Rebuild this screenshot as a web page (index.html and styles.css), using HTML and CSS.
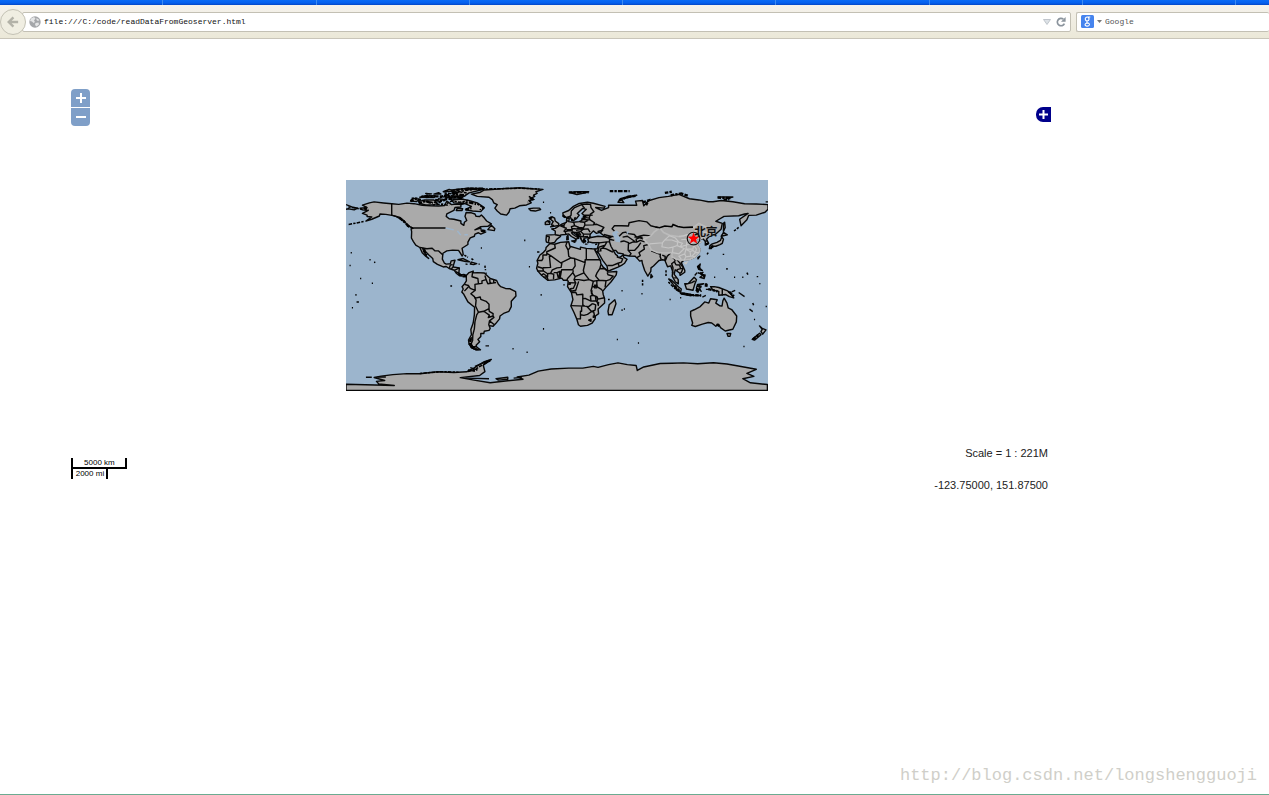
FILE: index.html
```html
<!DOCTYPE html>
<html lang="zh-CN">
<head>
    <meta charset="UTF-8">
    <title>readDataFromGeoserver</title>
    <link rel="stylesheet" href="styles.css">
</head>
<body>
    <div class="tab-strip"></div>
    <div class="toolbar">
        <button class="back-btn" type="button" aria-label="Back">
            <svg width="12" height="12" viewBox="0 0 14 14"><path d="M7.5 1.5 L2 7 L7.5 12.5 M2.5 7 H13" fill="none" stroke="#b3b2a8" stroke-width="2.8"/></svg>
        </button>
        <div class="address-bar">
            <svg width="12" height="12" viewBox="0 0 12 12">
                <circle cx="6" cy="6" r="5.7" fill="#a5a7aa"/>
                <path d="M2 2.5 L5 1 L6.5 2.5 L5 4.5 L6 6 L4.5 7 L3 5.5 L1 5 Z M7.5 2 L10.5 4 L9 5 L7.5 4 Z M6.5 7 L9.5 6.5 L10 8.5 L7.5 10.5 L6 9 Z" fill="#e4e5e6"/>
            </svg>
            <input class="address-input" type="text" aria-label="Address" value="file:///C:/code/readDataFromGeoserver.html">
            <svg width="8" height="6" viewBox="0 0 8 6"><path d="M.5 .5 H7.5 L4 5.5 Z" fill="#dde2e7" stroke="#b4bac1" stroke-width=".8"/></svg>
            <button class="reload-btn" type="button" aria-label="Reload">
                <svg width="10" height="10" viewBox="0 0 10 10"><path d="M7.4 2.2 A3.7 3.7 0 1 0 8.4 6.6" fill="none" stroke="#8b949d" stroke-width="1.7"/><path d="M9.6 0 V4.8 H5 Z" fill="#8b949d"/></svg>
            </button>
        </div>
        <div class="search-bar">
            <svg width="13" height="13" viewBox="0 0 13 13">
                <rect width="13" height="13" rx="1.5" fill="#4684ee"/>
                <path d="M9.3 2 H6.2 A2 2 0 1 0 6.4 6 Q5 7 6.5 7.7 Q9 8.6 8.3 10 Q7.4 11.6 5.3 11 Q3.2 10.2 4.6 8.7 Q5.4 8 6.9 8 M7 2.2 Q9.3 4 6.8 5.8" fill="none" stroke="#fff" stroke-width="1.1"/>
            </svg>
            <svg width="5" height="3" viewBox="0 0 5 3"><path d="M0 0 H5 L2.5 3 Z" fill="#777"/></svg>
            <input class="search-input" type="text" aria-label="Search" placeholder="Google">
        </div>
    </div>

    <div id="map" class="map">
        <svg class="world" viewBox="-180 -90 360 180" role="img" aria-label="World map">
            <rect x="-180" y="-90" width="360" height="180" fill="#9cb5cd"/>
            <!-- coordinates are longitude, latitude -->
            <g transform="scale(1 -1)">
                <g class="land">
                    <!-- North America -->
                    <path d="M-168 66 L-162 66.5 -166 68.5 -160 70.5 -156 71.3 -148 70.4 -141 69.7 -135 69.2 -128 70.3 -122 69.8 -115 68.5 -108 68 -101 67.8 -96 68.2 -94 72 -90 69 -85 69.5 -82 69 -82 67 -87 66.5 -88 64 -94 61 -94.5 59 -92 57 -88 56.5 -82 55 -82 53 -79.5 51.3 -79 54 -77 55.5 -78.5 59 -77.5 62.3 -73 62 -70 61 -69 59 -66 58.8 -64.5 60.2 -62 57.5 -60 55 -56 52.5 -59 50.5 -65 50.2 -70 47.5 -65 49 -64.5 46.3 -61 45.5 -65 43.8 -67 45 -70 43.8 -70.5 42 -74 40.7 -76 37 -76 35 -81 31.8 -80 26.5 -81 25.2 -82.7 28 -84 30 -89 30.2 -94 29.5 -97.3 27.5 -97.8 22.5 -96 19 -94.5 18.2 -91 18.6 -90.3 21 -87 21.5 -88.3 17.5 -88.7 15.8 -83.3 15 -83.7 11 -82 9 -79.5 9.5 -77.4 8.6 -78 7.5 -80 7.4 -80.5 8.2 -83 8.2 -85.7 10.2 -87.6 13 -92 14.5 -94.5 16.2 -97 15.8 -102 18 -105.5 20.3 -106 23 -109.3 26 -112.2 29 -113 31.3 -114.7 31.7 -112.8 28 -110.9 24.2 -109.5 23.1 -112 25 -115 28 -117 32.4 -120.5 34.5 -122.5 37.5 -124.2 40.5 -124 46 -124.5 48.3 -122.8 48.8 -127 51 -130 54.5 -134 58 -139.5 59.6 -146 60.7 -151 61 -151.5 59.3 -158 56.5 -163 55 -158 58.5 -162 58.8 -162 60 -166 61.5 -161 64 -166 64.5 Z"/>
                    <path class="borders" d="M-180 69 L-175 67 -170 66 -173 64.5 -178 65.5 -180 65 M-141 69.7 V60 L-137 58.8 -133 56.5 -130 55 M-122.8 49 H-95 M-117 32.5 L-111 31.3 -106.5 31.8 -104 29.5 -101 29.5 -97.3 26 M-92 14.5 L-91 17.5 -89 17.8 M-89 15.8 L-90 14 M-87.5 13 L-83.3 15 M-85.7 11 H-83.7 M-83 8.2 L-82.5 9.5"/>
                    <!-- Arctic islands and Greenland -->
                    <path d="M-117 70 L-112 68.7 -105 69 -102 70 -105 73 -113 73 -118 71.5 Z M-125 72 L-123 74.3 -117 73.5 -120 71.6 Z M-100 71.5 L-97 73.5 -101 74 -102 72.5 Z M-90 73 L-81 73.7 -76 72.7 -68 70.5 -62 66.5 -65 63 -72 63.5 -78 64.5 -73 67.5 -79 70 -88 70.5 Z M-86 64 L-81 64 -80.5 65.5 -85 66 Z M-95 75 L-81 74.6 -80 76 -90 76.5 Z M-117 75.3 L-105 75 -104 76.5 -113 76.4 Z M-97 80 L-87 80.5 -92 82 Z M-90 76.5 L-79 76.2 -75 79 -65 81.5 -62 82.5 -75 83 -90 81.5 -85 79.5 Z M-105 78 L-99 78 -101 79.2 Z M-96 76.5 L-92 77 -95 78 Z M-111 78 L-107 78.2 -112 78.6 Z"/>
                    <path d="M-73 78 L-66 79.3 -62 81.5 -50 82.3 -32 83.4 -22 82.5 -12 82 -18 80 -17 78.5 -20 77 -19 76 -22 74.5 -20 73.5 -24 72.5 -22 70.5 -26 68.7 -32 68 -36 66 -40 65.5 -41 62.5 -43 60 -48 61 -51 63.5 -53 66 -51 69 -54 70.5 -55 73 -58 75.3 -68 76 Z M-24 65.5 L-20 66 -15 66 -14 64.8 -18.5 63.5 -22.5 64 Z"/>
                    <path d="M-59 47.7 L-53.5 46.8 -53 48.5 -56 51.5 Z M-84.5 22 L-80 23 -74.5 20.2 -78 20.5 Z M-74 18.3 L-73 20 -68.5 18.6 -71 17.8 Z M-78 18.3 L-76.3 18 M-67 18.2 H-65.8"/>
                    <!-- South America -->
                    <path d="M-77.4 8.6 L-75 11 -71.5 12.3 -71.5 10.8 -68 11 -62 10.6 -57 6 -51.5 4.3 -50 1 -48 -1 -44 -2.5 -40 -2.8 -35.3 -5.3 -35 -9 -39 -13.5 -39 -18 -41 -22 -45 -23.5 -48.6 -26 -49 -28.5 -52.3 -32.5 -54.5 -34.8 -58 -34.2 -57 -36.5 -58 -38.3 -62 -39 -62.5 -41 -65 -41 -65 -43.5 -67.5 -46 -66 -48 -69 -51 -68.5 -52.5 -65.3 -54.8 -69 -55 -73 -53 -75 -50 -75.5 -46.5 -73 -42 -73.5 -37.5 -71.5 -32 -70.5 -25 -70.3 -18.5 -76 -14 -79.5 -7.5 -81.2 -5.5 -80 -3 -81 -1 -78.8 1.5 -77.3 3.9 Z"/>
                    <path class="borders" d="M-72 11.5 L-72.5 7.5 -67.5 6 -67 1.5 -70 1 -69.8 -4.2 -74 -2.5 -75.5 0 -79 1 M-79 -4.8 L-75.5 -1 M-67 1.5 L-64 1.8 -64 4 -60.5 5 -61.5 8.5 M-60.5 5 L-59 1.5 -52 2.5 M-57.5 5.5 L-57 2 M-54 5.5 V2.5 M-70 -4.3 L-73.5 -7 -70.5 -9.5 -69 -12.5 -69.5 -17.5 -67 -22.8 -62.5 -22 -58 -19.8 -58 -16 -60.5 -13.5 -65 -11.8 -65.5 -9.8 -70.5 -11 M-58 -20 L-57.8 -22 -54.5 -24 -54.6 -26 -58.6 -27.3 -57.7 -25.3 -62.5 -22 M-54.6 -26 L-53.8 -27.2 -57.6 -30.2 -58.3 -34 M-57.6 -30.2 L-53.4 -33.5 M-67 -22.8 L-68.5 -25 -70 -31 -70.5 -37 -71.8 -42 -72 -47 -73.3 -50 -72 -52 -68.5 -52.3 M-73 -44 L-74 -48 M-74.2 -50 L-73 -53 -70 -54.5 M-72 -52.7 H-69.5 M-61 -51.5 H-58"/>
                    <!-- Africa -->
                    <path d="M-6 35.8 L-2 35.2 3 36.8 10 37.3 11 33.5 15 32.3 20 30.8 20 32.7 25 31.7 30 31.3 32.5 31.2 32.6 29.8 35.5 24 37.2 20.8 37.3 18.8 39.5 15.5 43.2 12.5 43.3 11.4 51 11.9 50.5 9 46 3 41.5 -1.8 39 -5 39.5 -8 40.6 -11 40.6 -15 35 -20 35.5 -24 32.8 -26 32.5 -28.5 30 -32 26 -34 20 -34.8 18.3 -33.5 17 -29 14.5 -23 11.8 -17.5 13.6 -12 12.3 -6 9 -1 9.6 3.8 8 4.5 5.5 4.5 4 6.3 -2 4.8 -7.7 4.4 -13 8.5 -16.5 12.5 -17.4 14.7 -16.3 19 -17 21.3 -14.5 26 -11.5 28.3 -9.6 30.5 -9.3 32.5 Z M44 -25 L47 -25 50.3 -15.5 49.3 -12.2 44.5 -16.5 43.5 -22 Z"/>
                    <path class="borders" d="M-2 35 L-1.5 32 -8.7 28.8 V26 H-12 V23 L-13 21.3 H-17 M-8.7 27.5 L-4.8 25 3.3 19.2 12 23.5 10 25 9.5 30.2 7.5 34 8.5 37 M9.5 30.2 L11.5 33 M-4.8 25 H-6.5 L-5.5 15.5 -11.5 15.2 -12.2 14.7 -16.5 16 M-12.2 14.7 L-11.5 12.4 -16.7 12.4 M-11.5 12.4 L-8 10 -8 7.5 -11.5 10 -13.3 9 M-11.5 6.9 L-8.5 7.5 -7.5 4.4 M-8 10 L-5.5 10.4 -4 13.3 0 15 3.5 15.5 4.2 19.2 M-5.5 10.4 L-2.8 9.6 -3 5.1 M-2.8 11 H0 L1.2 6.1 M0 11 L2.4 12 1.6 6.2 M2.4 12 L3.6 11.7 2.7 6.4 M3.6 11.7 L4 13.5 13.5 13.7 15.5 16.8 15 23 12 23.5 M15 23 L24 19.5 V22 H25 V31.5 M25 22 H37 M24 19.5 L22.5 13 23 10.8 15.5 7.5 13.5 11 14 13 M13.5 11 L9 6 8.5 4.5 M15.5 7.5 L14.5 5 16 2.2 9.8 2.3 M11.3 2.3 V1 H9.5 M16 2.2 L14 -2.3 11.5 -2.8 12 -4.8 16 -4 18.5 3.5 M14.5 5 L18.5 5 23 4.3 27.4 5 23 10.8 M27.4 5 L31 3.6 34 4.2 36 4.5 33 8 34 10.5 36.5 14.3 37.5 18 M36.5 14.3 L40.5 14.5 42.8 12.5 M42.8 11 L43.5 9.2 48 8 45 5 41.8 4 36 4.5 M41.8 4 L41 -1.5 M34 4.2 L34 -1 37.5 -3 39 -4.6 M34 -1 H30 L30.5 1.5 31 3.6 M30 -1 L29 -4.5 30.5 -8.3 34 -9.5 35 -11.6 40.4 -10.5 M30.5 -8.3 L28.5 -9 29 -13.3 24 -11 22 -11.2 22 -7.5 17 -8 16 -5.8 12.3 -6 M22 -11.2 V-16.5 L23.5 -17.6 11.8 -17.2 M29 -13.3 L33.3 -13 32.8 -9.3 M33.3 -13 L34.5 -14.5 35.2 -17 35.5 -14 M30.3 -15.5 L27 -18 23.5 -17.6 M30.3 -15.5 L33 -16.5 32.5 -21 29.5 -22.2 25.5 -18 M21 -18 V-22 H20 V-28.5 H17 M20 -25 L23 -25.5 26 -24.6 29.5 -22.2 31.3 -22.4 32 -26 32.8 -26.8 M27 -29.5 L29 -28.7 29 -30.5 Z M31 -26 L32 -27 31 -27.2 Z"/>
                    <path class="borders" d="M30 -4 L29.3 -6.5 30.8 -8.5 M34.2 -10 L34.5 -13.8 M32 0.2 H34 V-2 H32 Z"/>
                    <!-- Eurasia -->
                    <path d="M-9 43 L-1.5 43.4 -1.5 46.5 -4.5 48.3 -1.5 48.7 1.7 50.9 4.5 52.5 8 53.8 8.3 57 10.5 57.6 10 54.5 14 54 19 54.5 21.2 55.5 21.5 57.5 24 57.3 23.5 59.2 30 60 23 60 21.3 61.5 25 65 22 65.8 17.3 61.5 19 60 16.5 57 14.3 55.5 12.8 55.6 11 59 8 58 5.3 59 5 62 10 64 14 67.5 19 70 26 71 31 70.2 41 67.5 40 66 33 66.5 38 64 40 65 44 66.5 44 68.5 54 68.5 60 68.5 68 68.5 67 72 73 72.5 74 68 78 72.3 87 75 95 76 104 77.7 113 74 121 73 129 71.5 133 71.5 140 72.5 150 71.5 160 69.7 170 69.5 180 69 180 65 177.5 62.5 170 60 163.5 59.8 162 56 157 51 155.8 56.5 163 61.5 160 61 155 59.5 142.5 59 135.5 54.8 141 53 140 48 135 43.5 131 42.8 127.5 39.5 129.4 36 126.5 34.5 126.5 37.5 124.5 40 121.5 39 121.5 40.8 118 39 119 37.3 122.5 37 119.5 35 122 31 121.5 28.5 118 24.5 113.5 22.3 108.5 21.7 106 19.5 109 13 109 11.3 105 8.7 104.8 10.5 102.5 12.2 100.8 13.4 100 9.5 103.4 5 103.5 1.4 101 3 98.3 8 98.7 12 97 16.8 94.3 16 92 21.5 90 22 87 21.3 82.3 16.7 80.2 15 80 12 77.5 8 74.8 12.8 72.8 19 72.5 21.3 70.5 20.8 69 22.5 66.7 25 61.5 25.2 57 26 56.5 27 52 27.7 50 30 48 30 50 26.5 51.5 25.5 51.5 24.2 54 24.2 56.3 26 57 24 59.8 22.4 57.7 19 55 17.2 52 15.6 45 12.8 43.3 12.7 42.7 16.5 39 21.5 35 28.5 34.8 29.5 34.3 27.9 32.6 29.8 32.5 31.2 34.3 31.3 36 36.6 30.5 36.5 27 37.2 26.3 39.5 29 41 35 42 41.5 41.5 37 44.8 39 47.2 35 46.2 36.5 45.3 33.5 44.5 31 46.6 28.5 44 28 42 29 41.1 26 40.8 23 40.3 24 38 22.7 36.5 21 38.5 19.5 41.8 15 44.3 13.5 45.7 12.3 45 13.7 43.5 18.5 40.3 16.5 39.8 16 38 15.6 40 12.3 41.8 10 44 7 43.5 3.2 43.2 3 41.8 -0.3 39.3 -2 36.8 -5.5 36 -9 37 -9.4 38.7 Z"/>
                    <!-- European borders -->
                    <path class="borders" d="M-8.5 42 L-6.5 41.5 -7.3 37.3 M-1.5 43.3 L3 42.4 M7.5 43.8 L7 46 6 46.3 8 49 6 49.5 2.5 51 M6 49.5 L6 51.5 3.5 51.4 M6 51.5 L7 53.3 M7 46 L10.5 46.8 13.5 46.5 M8 47.6 L13 47.5 12.3 50.2 15 51 14.3 53.8 M15 51 L18.8 49.5 22.5 49.2 23.8 51.5 23.5 54 19.5 54.4 M13 48.6 L17 48.2 18.8 49.5 M17 48.2 L22.5 48 22.5 49.2 M16.2 46.8 L20 46.2 22.5 48 26.5 48.3 28.2 45.5 M20 46.2 L22.5 44 28.5 43.8 M22.5 44 L22.5 41.5 26.5 41.8 M22.5 41.5 L20 42 20.5 39.5 M19 45 L16 45.2 13.5 45.5 M16 45 L18.5 42.8 19 45 20.3 43 M23.5 51.5 L31 51.7 32 53.5 28.2 56 21 56.3 M23.5 54 L26.5 55.5 M31 52 L34 52.2 40 49.5 38.2 47.2 M28.2 56 L27.5 57.5 28 59.4 M24.5 57.9 L27.5 57.5 M28 60.5 L31.5 63 29 66.5 28.5 69.8 M23.5 66 L21 69 25.5 69.5 29 69 M21 69 L15 66.5 12.2 63.5 12 60 11.3 59 M8.5 55 H9.8"/>
                    <path d="M-5.5 50 L1.3 51.2 1.5 52.8 -1.5 55 -2 57.5 -4 58.6 -6 57 -3.2 54.5 -4.8 52 -3 51.3 Z M-10 52 L-6.3 52.3 -6 54.5 -8 55.2 -10 53.8 Z M8.3 39 L9.6 39.2 9.4 42.8 8.5 42 Z M12.5 38 L15.5 38.2 15.2 36.8 Z M23.8 35.3 H26 M32.5 34.8 L34.3 35.4 M21 37.5 H23"/>
                    <!-- Asian borders -->
                    <path class="borders" d="M41.5 41.5 L44.8 39.7 44.8 37.2 42.4 37.2 36 36.4 M40 43.5 L46.5 41.8 48.5 41.8 M41.5 41.2 L46.5 41 M44.8 39.5 L48.8 38.5 M44.8 37.2 L46 33.5 48 30 M42.4 37 L41 34.3 35.8 32.7 34.8 29.5 M41 34.3 L39 32 37 31 37.5 29.5 35 29.3 M39 32 L42 31.2 46.5 29 48 28.5 M43 17 L47 17 52 19 55 20 56 22.7 51.5 24.2 M52 19 L53 16.6 M54 37.3 L57 38 61 36.5 60.7 30 63.2 27.2 61.7 25.2 M61 35.5 L65 37.3 68 37 71 38.5 74.8 37.2 M60.8 30 L66.3 30 69.5 33.5 71.5 36.5 M68.2 23.8 L71 25.5 70 28 74.5 31 74 34 78 35 M53 42 L56 45 58.5 45.5 61 44.3 66 43.5 68 41.2 71 42.2 74 43 80 42.3 M56 41.3 L60 42 66.5 37.5 M67.8 37.2 L67.5 39.5 70.5 40.8 73.5 39.5 M66 41.3 L69.2 41.4 73 41 M49 46.5 L47 48.5 49 51 55 51 61 50.8 61.5 53.5 70 55.3 76.5 54.3 80 51 87 49.2 M88.2 27.8 L88 24.5 89 22 M92 21.5 L92.3 24.8 89.8 26 M92.3 21 L94 25 97.2 28 M97.5 28 L98.7 24 101 21.5 M101 21.5 L100 20.3 97.8 18.6 99 15 98.5 11 99.5 10.5 M100.3 20 L101.5 17.7 104.5 17.5 105.5 14.4 102.5 13.5 102.5 12.2 M105.5 14.4 L107.5 14.5 106 11 104.5 10.5 M102 22.3 L104.5 19.5 107.5 15.5 107.5 14.5 M80.3 29.5 L88 26.5 M100 6.5 H102 M126.5 38 H128.3"/>
                    <!-- Pacific and Indian ocean islands -->
                    <path d="M130 31.5 L131.5 31.5 132 33.5 135.5 33.5 139 34.8 141 36 142 39.5 140.5 41.5 139.5 38.5 136.5 36.8 132.5 35.5 130.5 34 Z M140 42 L145.3 43.3 142 45.4 141 43.5 Z M142 46 L143.5 49.5 143 54 142 53 Z M120.3 22.7 L121.8 25 120.2 23.8 Z M80 6.5 L81.5 7.5 80.2 9.5 Z M120 16 L122.2 18.3 121.5 15 124 12.8 120.8 13.8 Z M122 7 L125.5 6 126.3 9 124 8.5 Z M122 10 L125 11.5 M117.5 8.5 L119.5 11"/>
                    <path d="M95.3 5.6 L98 4.3 104 -1.5 106 -3 105.5 -5.8 102 -4 98.7 1.5 Z M105.3 -6.7 L108.5 -6.5 114.4 -7.7 114.3 -8.7 106.5 -7.4 Z M109 1.5 L112 1.8 117 7 119 5 117.5 1 116 -4 110.5 -3 Z M119.5 -5.5 L119 -2 120 1 125 1.5 121 0 120.5 -1 123 -1 121.5 -2.5 123 -5 121 -3 120.5 -5.5 Z M131 -1 L134 -1 138 -1.7 145 -4.3 148 -6.5 150.8 -10.6 147 -9.5 144 -7.7 138 -8.3 138 -5 133 -4 Z M141 -2.6 V-9 M109.5 1 L115 2.5 117.5 4 M116 -8.5 H123 M124 -10 L127 -8.5 M128 1.5 V-1 M127 -3.3 H130.5 M149 -5.5 L152 -4.2 M155 -6 L160 -9.5 M101 -2 L105 -5"/>
                    <path d="M114 -22 L114 -26 115.7 -32 115 -34 118 -35 124 -33 129 -31.6 132 -32 135.5 -34.8 137.8 -33 139.5 -36 143.5 -38.8 147 -38 150 -37.3 153 -31 153.3 -26 149 -20.5 146 -19 145 -15 142.6 -10.8 141.5 -13 140.8 -17.5 139 -17.4 135.5 -15 136.7 -12.2 131 -11.3 129.5 -15 126 -14 122.2 -18 117 -20.7 Z M145 -41 H148.2 L147.5 -43.4 146 -43.4 Z M172.8 -34.5 L175 -36.5 178.3 -37.8 175.5 -41.5 174 -39.3 175 -37.5 Z M172.8 -40.7 L174 -42 168.5 -46.6 166.5 -46 Z M164.2 -20.2 L167 -22.3"/>
                    <!-- Russian arctic -->
                    <path d="M11 79.3 L17 80 27 80 23 78.8 17 77.6 Z M52 71 L57 70.7 55 73.5 68 77 61 76 54 74 Z M137 75.5 H150 L144 74 M178 71.3 H180"/>
                    <!-- Antarctica -->
                    <path d="M-180 -89.6 V-84.3 L-138.8 -85.3 -152 -84 -154 -81.8 -147 -81 -156 -78.5 -150 -77.3 -140 -76 -128 -75.2 -117 -75.3 -102 -73.6 -88 -74.2 -77 -73.6 -71 -70.5 -62 -65 -56 -63 -62.9 -68 -61.5 -73.5 -66 -76.8 -82.5 -78.6 -72 -80.5 -57 -83 -44 -81.5 -29 -80 -34 -78 -24 -76.5 -16 -73 -5 -71.2 10 -70.5 22 -70.5 31 -69 35 -69.8 44 -67.5 52 -66 60 -67.5 67.5 -68.2 68.5 -72.5 74 -69.5 88 -66.5 98 -66.3 108 -66 120 -66.8 133.5 -65.9 145 -67 153.5 -68.5 170 -71.5 162 -75 168 -77.5 158.5 -79.5 165 -83 179.5 -84.5 V-89.6 Z"/>
                    <path d="M-163 -78.3 H-158 M-153 -78 H-146 M-74 -70 L-68 -72 M-76 -72 L-70 -73.2 M-78 -79 L-58 -79.5 M-70 -69 L-58 -64 M-52 -79.5 L-42 -78.3 -42 -80 -50 -80.7 Z M-37 -79 L-30 -78.5"/>
                </g>
                <!-- China provinces -->
                <path class="china" d="M74 39.5 L80 42.3 82.5 45.3 87.5 49.2 91 45.2 96 42.8 105 41.6 112 43.5 119 46.7 116.7 49.8 121 53 127 50 131 47.8 134.5 48.3 131 43 126 41.8 121.5 39 121.5 40.8 118 39 119 37.3 122.5 37 119.5 35 122 31 121.5 28.5 118 24.5 113.5 22.3 108.5 21.7 102 22.3 98 24.5 98 28 92 27.7 86 28 80.5 30.3 78.5 34.5 Z"/>
                <path class="province" d="M79 35.5 L90 36.5 92 39 96 42.5 M90 36.5 L89.5 33 95 32 99 32.8 98.5 28 M92 39 L98 38.8 103 37 102.5 34 99 32.8 M96 42.5 L101 40.5 104 37 107 36 105 33 102.5 34 M106 39 L111 39.5 110.5 34.5 105 33 108.5 31.5 106 29 104 27 98.5 28 M111 39.5 L114 40.5 114 36 110.5 34.5 110 31 116 31 116.5 34.5 114 36 119 38 M114 40.5 L119.5 42 121.5 46 126 45.5 131 45 M119.5 42 L125 43 127 42 M110 31 L109 27 104 25 106 22.5 M109 27 L110 24.5 114 25 113.5 29 110 31 M113.5 29 L116 30 118 28 115 25 118 24.5 M118 28 L121 28 M118 28 L119 31 116.5 34.5 119.5 35 M108.5 21.7 L110 24.5 M104 42 L108 42.4 114 44 M108.7 19.2 L111 20 110 18.4 Z"/>
                <path class="rough-solid" d="M84 50 L87.5 49.2 92 50.7 98 50.2 99 52 103 50.3 108 49.5 116 49.8"/>
                <!-- broken coastlines and small islands -->
                <path class="rough" d="M-124 74.5 H-119 M-116 76 L-108 77 M-100 75 L-95 76 -88 75.5 -80 77 M-96 79 L-88 78 -84 80 -77 79 M-94 70 L-90 72 -83 71 -76 72.5 M-106 68.7 L-98 69.5 -92 68.2 M-88 78.5 L-79 81 -68 82.3 M-115 72.5 L-107 71 -99 71 M-68 69.5 L-62 66 -66 64.5 M-75 82 L-30 83 -15 82.3 M-24 76 L-20 73.5 -25 71 M-130 54 L-135 58.5 M-123 49 L-128 51 M-165 54.5 L-178 52 M-178 67 L-166 65 M-83 9 L-86 12 M-74.5 -46 L-72 -53.5 -66 -54.8 M-69 -71 L-58 -64.5 M-117 -75 L-98 -73.5 -84 -74 M23 38 L27 36.5 M16 43.5 L19.5 42 M12 55.5 L16 58 M120 11 L125 9 126 7 M93 13 V8 M146 -5 L150 -9 M95 3 L101 -3"/>
                <path class="rough-thick" d="M-125 72 L-121 74 -116 73 M-118 70 L-112 72 -106 70 M-104 73 L-98 72 -94 74 -88 73.5 M-112 75.5 L-104 76 -98 76 -92 77 M-92 74.5 L-85 75.5 -80 74 M-90 79.5 L-84 77.5 -78 77 M-86 81.5 L-76 82.5 -63 82.5 M-82 69.5 L-76 71 -69 69.5 M-78 65 L-73 66 M-165 66 L-161 64.5 M-134 57.5 L-130 54 -126 50 M-23 75 L-20 72.5 M-114 30 L-111 26 M-64 47 L-60 46 M10 79.5 H27 M45 80.5 H62 M53 72.5 L60 75.5 67 76.5 M92 79 L98 80 M97 77 L106 78.5 112 76.5 M73 71 L78 72.5 76 68.5 M137 75 L149 74.5 M142 73.2 L147 73.5 M-7 57 L-4 58.5 M-8 54.5 H-6 M5 60 L7 58 M22 39 L25 37 M17 43 L19 41 M22 58.5 L25 59 M120 17 L122 14 M122 11 L126 7.5 M106 -6.7 L114 -8 123 -8.5 M119 -5 L120 -1 M127 2 V-1 M129 -3 L137 -5 M147 -5.5 L151 -9 M100 0 L105 -5 M-73.5 -45 L-74.5 -51 -69 -54.5 M-76 -73 L-68 -71.5 M-62 -66 L-57 -64 M127 35 L129 36 M131 32 L134 34 M-77 8 L-83 9 M136 -33 L139 -35 M167 -46 L172 -42"/>
                <path class="rough" d="M-160 22 H-159 M-156 20 L-155 19.5 M-177 17 H-176 M-168 6 H-167 M-176 28 H-175 M-158 2 H-157 M-172 -8 H-171 M-171 -14 H-169 M-175 -19 H-174 M-91 -.5 H-89.5 M-79 26 L-76 24 M-73 23 L-71 21.5 M-61.5 17 L-61 13 M-61 10.5 H-60 M-65 32 H-64 M-17 28.5 L-14 28.5 M-24 16 H-23 M-28 38.5 H-27 M-6 62 H-5 M-12 71 H-11 M6 0 V1 M-14 -8 H-13 M-12 -37 H-11 M-38 -54 H-37 M-26 -57 H-25 M55 -21 H56 M57 -20 H58 M43.5 -12 H45 M55 -4.5 H56 M73 5 V0 M72 -7 H73 M69 -49 H70 M51 -46 H52 M96 -12 H97 M105 -10.5 H106 M145 13.5 V15 M134 7 H135 M151 7 H152 M158 7 H159 M162 11 L163 9 M171 7 V8 M173 1 V2 M167 -15 L168 -17.5 M178 -18 H179 M168 -29 H169 M159 -52 H160 M142 27 V26 M128 26.5 L129 28 M151 46.5 L155 49.5"/>
                <path class="light" d="M-95 49 L-88 47.5 M-85 46.5 L-82 43 M-79 43.3 H-76"/>
                <path class="water" d="M47 45 L51 47 53 45 51 44.5 52.5 42 54 41 53.9 37 50 37.4 49 40.5 47.5 43 Z M59 45 L61.5 46.5 60.5 43.7 Z"/>
            </g>
            <circle cx="116.5" cy="-40" r="5.4" fill="none" stroke="#111" stroke-width="1"/>
            <path d="M116.5 -45.2 L117.8 -41.7 121.5 -41.6 118.6 -39.3 119.6 -35.8 116.5 -37.8 113.4 -35.8 114.4 -39.3 111.5 -41.6 115.2 -41.7 Z" fill="#f00"/>
            <text class="city-label" x="117" y="-42">北京</text>
        </svg>

        <div class="zoom-control">
            <button class="zoom-btn" type="button" aria-label="Zoom in"><svg width="10" height="10" viewBox="0 0 10 10"><path d="M5 0 V10 M0 5 H10"/></svg></button>
            <button class="zoom-btn" type="button" aria-label="Zoom out"><svg width="10" height="10" viewBox="0 0 10 10"><path d="M0 5 H10"/></svg></button>
        </div>

        <button class="layer-btn" type="button" aria-label="Layers">
            <svg width="9" height="9" viewBox="0 0 9 9"><path d="M4.5 0 V9 M0 4.5 H9" stroke="#fff" stroke-width="2"/></svg>
        </button>

        <div class="scale-line">
            <div class="scale-top">5000 km</div>
            <div class="scale-bottom">2000 mi</div>
        </div>

        <div class="map-info">
            <div>Scale = 1 : 221M</div>
            <div>-123.75000, 151.87500</div>
        </div>
    </div>

    <div class="watermark">http://blog.csdn.net/longshengguoji</div>
</body>
</html>
```
FILE: styles.css
```css
* {
    box-sizing: border-box;
}

body {
    display: flex;
    flex-direction: column;
    min-height: 100vh;
    margin: 0;
    background: #fff;
    border-bottom: 1px solid #6bab91;
    font-family: "Liberation Sans", Arial, "Noto Sans CJK SC", sans-serif;
    overflow-x: hidden;
}

button,
input {
    margin: 0;
    padding: 0;
    border: 0;
    background: none;
}

/* browser chrome */
.tab-strip {
    height: 5px;
    background:
        repeating-linear-gradient(90deg, transparent 0 12%, #3f8cf0 12% 12.08%) 10px 0,
        linear-gradient(#0a6af5, #0560ee 60%, #0546c4);
}

.toolbar {
    display: flex;
    align-items: center;
    height: 34px;
    background: linear-gradient(#f5f2ec, #ebe8d8);
    border-bottom: 1px solid #c9c5b9;
}

.back-btn {
    display: flex;
    align-items: center;
    justify-content: center;
    flex: none;
    width: 26px;
    height: 26px;
    margin-right: -4px;
    border: 1px solid #c4c2b5;
    border-radius: 50%;
    background: #f0eee2;
    z-index: 1;
}

.address-bar,
.search-bar {
    display: flex;
    align-items: center;
    height: 20px;
    background: #fff;
    border: 1px solid #c3c0b4;
    border-radius: 2px;
}

.address-bar {
    flex: 1;
    gap: 3px;
    margin-right: 5px;
    padding: 0 4px 0 6px;
}

.search-bar {
    flex: none;
    gap: 3px;
    width: 193px;
    padding-left: 4px;
    border-right: 0;
}

.address-input,
.search-input {
    flex: 1;
    min-width: 0;
    font: 8px "Liberation Mono", "Courier New", monospace;
    color: #111;
}

.search-input::placeholder {
    color: #555;
    opacity: 1;
}

.reload-btn {
    display: flex;
    margin-left: 2px;
}

/* map */
.map {
    position: relative;
    display: flex;
    align-items: center;
    justify-content: center;
    height: 407px;
    margin: 43px 218px 0 5%;
}

.world {
    width: 422px;
    height: 211px;
}

.land {
    fill: #aaa;
    stroke: #080808;
    stroke-width: 1.2;
    stroke-linejoin: round;
}

.land .borders {
    fill: none;
}

.rough,
.rough-solid,
.rough-thick {
    fill: none;
    stroke: #000;
    stroke-width: 1.3;
}

.rough {
    stroke-dasharray: 2 1 3 1;
}

.rough-thick {
    stroke-width: 2;
    stroke-dasharray: 3 1 2 1 4 1;
}

.light {
    fill: none;
    stroke: #9cb5cd;
    stroke-width: 1.2;
}

.water {
    fill: #9cb5cd;
}

.china {
    fill: #aaa;
    stroke: #bbb;
    stroke-width: 1.4;
}

.province {
    fill: none;
    stroke: #c6c6c6;
    stroke-width: 1;
}

.city-label {
    font-family: "Noto Sans CJK SC", sans-serif;
    font-size: 10px;
    font-weight: bold;
    fill: #111;
}

.zoom-control {
    position: absolute;
    top: 7px;
    left: 8px;
    display: flex;
    flex-direction: column;
    gap: 1px;
}

.zoom-btn {
    display: flex;
    align-items: center;
    justify-content: center;
    width: 19px;
    height: 18px;
    background: #7f9fc8;
    border-radius: 4px 4px 0 0;
}

.zoom-btn:last-child {
    border-radius: 0 0 4px 4px;
}

.zoom-btn path {
    stroke: #fff;
    stroke-width: 2;
}

.layer-btn {
    position: absolute;
    top: 25px;
    right: 0;
    display: flex;
    align-items: center;
    justify-content: center;
    width: 15px;
    height: 15px;
    background: #00008b;
    border-radius: 7px 0 0 7px;
}

.scale-line {
    position: absolute;
    bottom: 10px;
    left: 8px;
    font-size: 8px;
    line-height: 9px;
    text-align: center;
    white-space: nowrap;
}

.scale-top {
    width: 56px;
    border: 2px solid #000;
    border-top: 0;
}

.scale-bottom {
    width: 37px;
    height: 10px;
    border: 2px solid #000;
    border-width: 0 2px;
}

.map-info {
    position: absolute;
    right: 3px;
    bottom: -3px;
    display: flex;
    flex-direction: column;
    gap: 18px;
    font-size: 11px;
    line-height: 14px;
    text-align: right;
    color: #222;
}

.watermark {
    margin-top: auto;
    padding: 0 12px 8px 0;
    font: 17px/20px "Liberation Mono", "Courier New", monospace;
    text-align: right;
    color: #d0cfc9;
}
```
